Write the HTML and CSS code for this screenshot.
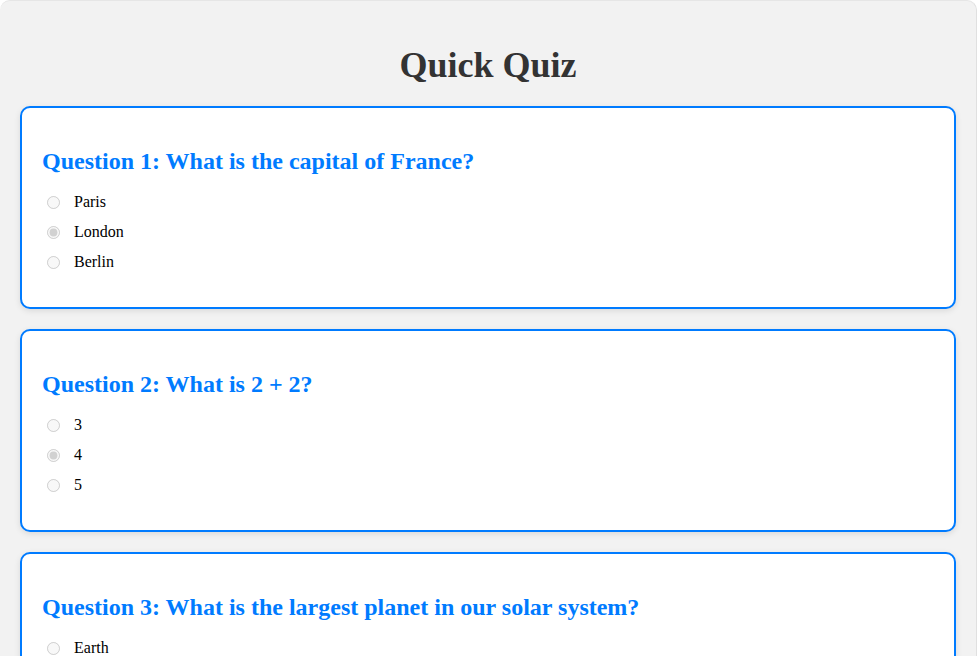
FILE: index.html
```html
<!DOCTYPE html>
<html lang="en">
<head>
    <meta charset="UTF-8">
    <meta name="viewport" content="width=device-width, initial-scale=1.0">
    <title>Quick Quiz</title>
    <link rel="stylesheet" href="styles.css">
</head>
<body>
    <div class="quiz-container">
        <h1>Quick Quiz</h1>

        <!-- Pergunta 1 -->
        <div class="question">
            <h2>Question 1: What is the capital of France?</h2>
            <label class="option"><input type="radio" name="q1" value="paris" disabled> Paris</label>
            <label class="option"><input type="radio" name="q1" value="london" checked disabled> London</label>
            <label class="option"><input type="radio" name="q1" value="berlin" disabled> Berlin</label>
        </div>

        <!-- Pergunta 2 -->
        <div class="question">
            <h2>Question 2: What is 2 + 2?</h2>
            <label class="option"><input type="radio" name="q2" value="3" disabled> 3</label>
            <label class="option"><input type="radio" name="q2" value="4" checked disabled> 4</label>
            <label class="option"><input type="radio" name="q2" value="5" disabled> 5</label>
        </div>

        <!-- Pergunta 3 -->
        <div class="question">
            <h2>Question 3: What is the largest planet in our solar system?</h2>
            <label class="option"><input type="radio" name="q3" value="earth" disabled> Earth</label>
            <label class="option"><input type="radio" name="q3" value="jupiter" disabled> Jupiter</label>
            <label class="option"><input type="radio" name="q3" value="mars" disabled> Mars</label>
        </div>
    </div>
</body>
</html>
```

FILE: styles.css
```css
body {
    font-family: "Liberation Serif", "Times New Roman", serif;
    margin: 0;
    background-color: #ffffff;
}

.quiz-container {
    background-color: #f2f2f2;
    padding: 20px;
    border-radius: 10px;
    border-right: 1px solid #e0e0e0;
    border-top: 1px solid #e6e6e6;
    min-height: 100vh;
}

h1 {
    font-size: 36px;
    text-align: center;
    color: #333;
    margin: 23px 0 20px;
}

.question {
    background-color: white;
    border: 2px solid #007bff;
    border-radius: 10px;
    padding: 20px 20px 25px;
    margin-bottom: 20px;
    box-shadow: 0 2px 6px rgba(0, 0, 0, 0.1);
}

h2 {
    font-size: 24px;
    color: #007bff;
    margin: 20px 0 17px;
}

.option {
    display: block;
    font-size: 16px;
    line-height: 20px;
    margin-bottom: 10px;
}

.option input {
    margin: 0 10px 0 5px;
    vertical-align: -2px;
}
```
